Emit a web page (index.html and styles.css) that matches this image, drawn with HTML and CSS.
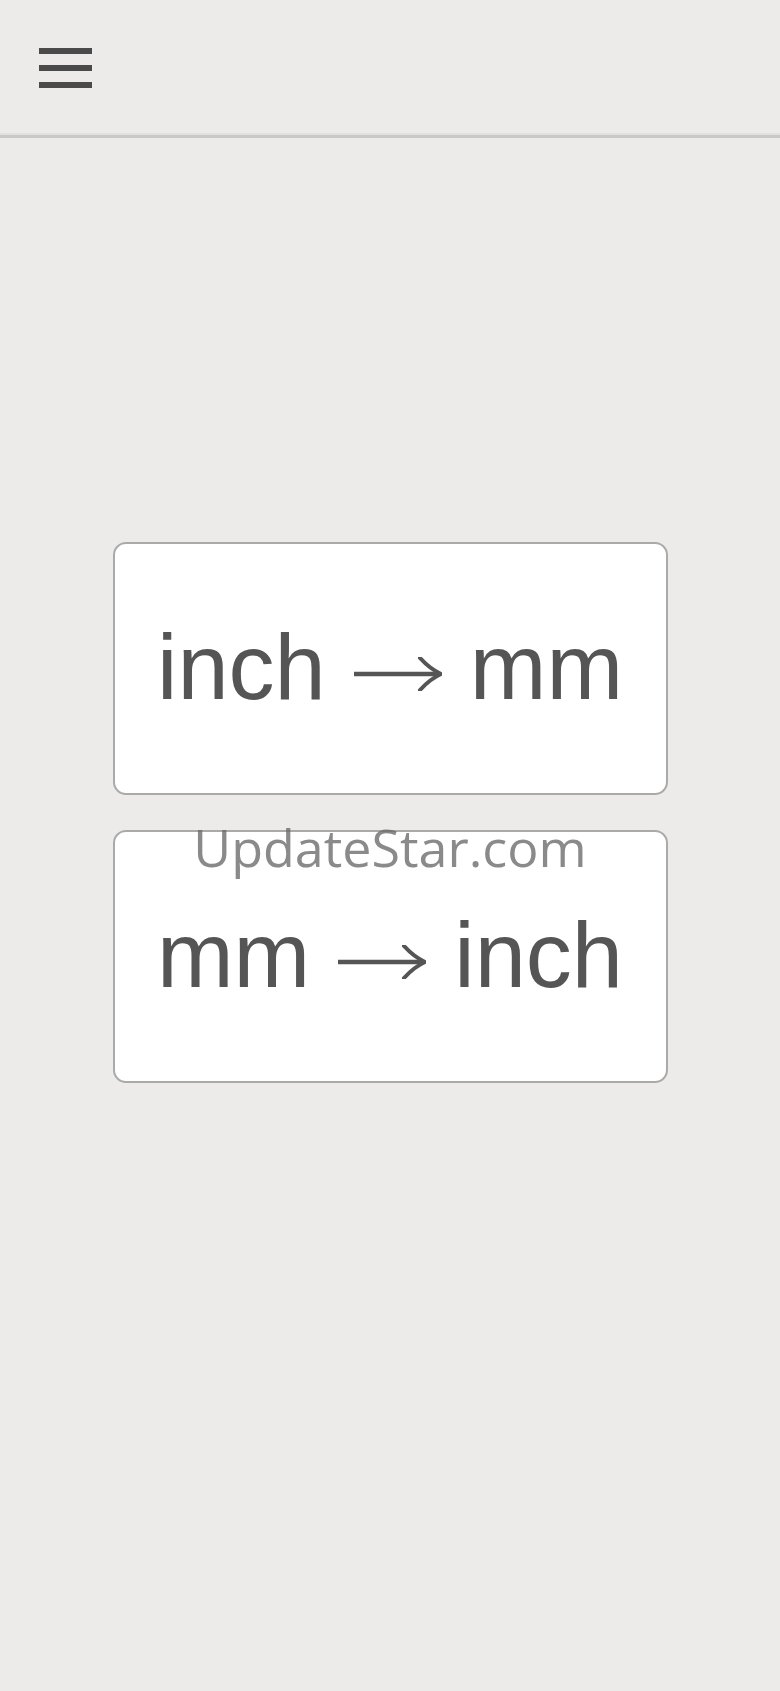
FILE: index.html
```html
<!DOCTYPE html>
<html lang="en">
  <head>
    <meta charset="UTF-8" />
    <meta name="viewport" content="width=device-width, initial-scale=1.0" />
    <title>inch / mm</title>
    <link rel="stylesheet" href="styles.css">
  </head>
  <body>
    <header class="topbar">
      <button class="menu-btn" aria-label="Menu">
        <span></span>
        <span></span>
        <span></span>
      </button>
    </header>

    <main class="content">
      <button class="convert-btn">
        <span>inch</span>
        <svg class="arrow" viewBox="0 0 88 34" width="88" height="34" aria-hidden="true">
          <path d="M0 17 H84" stroke="#555" stroke-width="4.5" fill="none" />
          <path d="M66 1 Q76 12 87 17 Q76 22 66 33" stroke="#555" stroke-width="4" fill="none" stroke-linecap="round" />
        </svg>
        <span>mm</span>
      </button>
      <button class="convert-btn">
        <span>mm</span>
        <svg class="arrow" viewBox="0 0 88 34" width="88" height="34" aria-hidden="true">
          <path d="M0 17 H84" stroke="#555" stroke-width="4.5" fill="none" />
          <path d="M66 1 Q76 12 87 17 Q76 22 66 33" stroke="#555" stroke-width="4" fill="none" stroke-linecap="round" />
        </svg>
        <span>inch</span>
      </button>
    </main>

    <div class="watermark">UpdateStar.com</div>
  </body>
</html>
```

FILE: styles.css
```css
body {
  margin: 0;
  padding: 0;
  background: #ecebe9;
  font-family: "Liberation Sans", Arial, sans-serif;
  color: #555;
  height: 100vh;
  position: relative;
}

.topbar {
  height: 135px;
  border-bottom: 2px solid #e2e1df;
  box-shadow: 0 3px 0 #c9c8c6;
  display: flex;
  align-items: flex-start;
  padding-left: 39px;
  box-sizing: border-box;
}

.menu-btn {
  margin-top: 48px;
  padding: 0;
  border: none;
  background: none;
  display: flex;
  flex-direction: column;
  gap: 11px;
  cursor: pointer;
}

.menu-btn span {
  display: block;
  width: 53px;
  height: 6px;
  background: #4a4a4a;
}

.content {
  display: flex;
  flex-direction: column;
  align-items: center;
  gap: 35px;
  padding-top: 407px;
}

.convert-btn {
  width: 555px;
  height: 253px;
  background: #fff;
  border: 2px solid #aaa;
  border-radius: 13px;
  font-family: "Liberation Sans", Arial, sans-serif;
  font-size: 92px;
  line-height: 1;
  color: #555;
  padding: 0 0 4px;
  display: flex;
  align-items: center;
  justify-content: center;
  gap: 28px;
  cursor: pointer;
}

.arrow {
  margin-top: 14px;
  flex-shrink: 0;
}

.watermark {
  position: absolute;
  top: 811px;
  left: 0;
  right: 0;
  text-align: center;
  font-family: "Open Sans", sans-serif;
  font-size: 52px;
  color: rgba(105, 105, 105, 0.78);
  pointer-events: none;
}
```
